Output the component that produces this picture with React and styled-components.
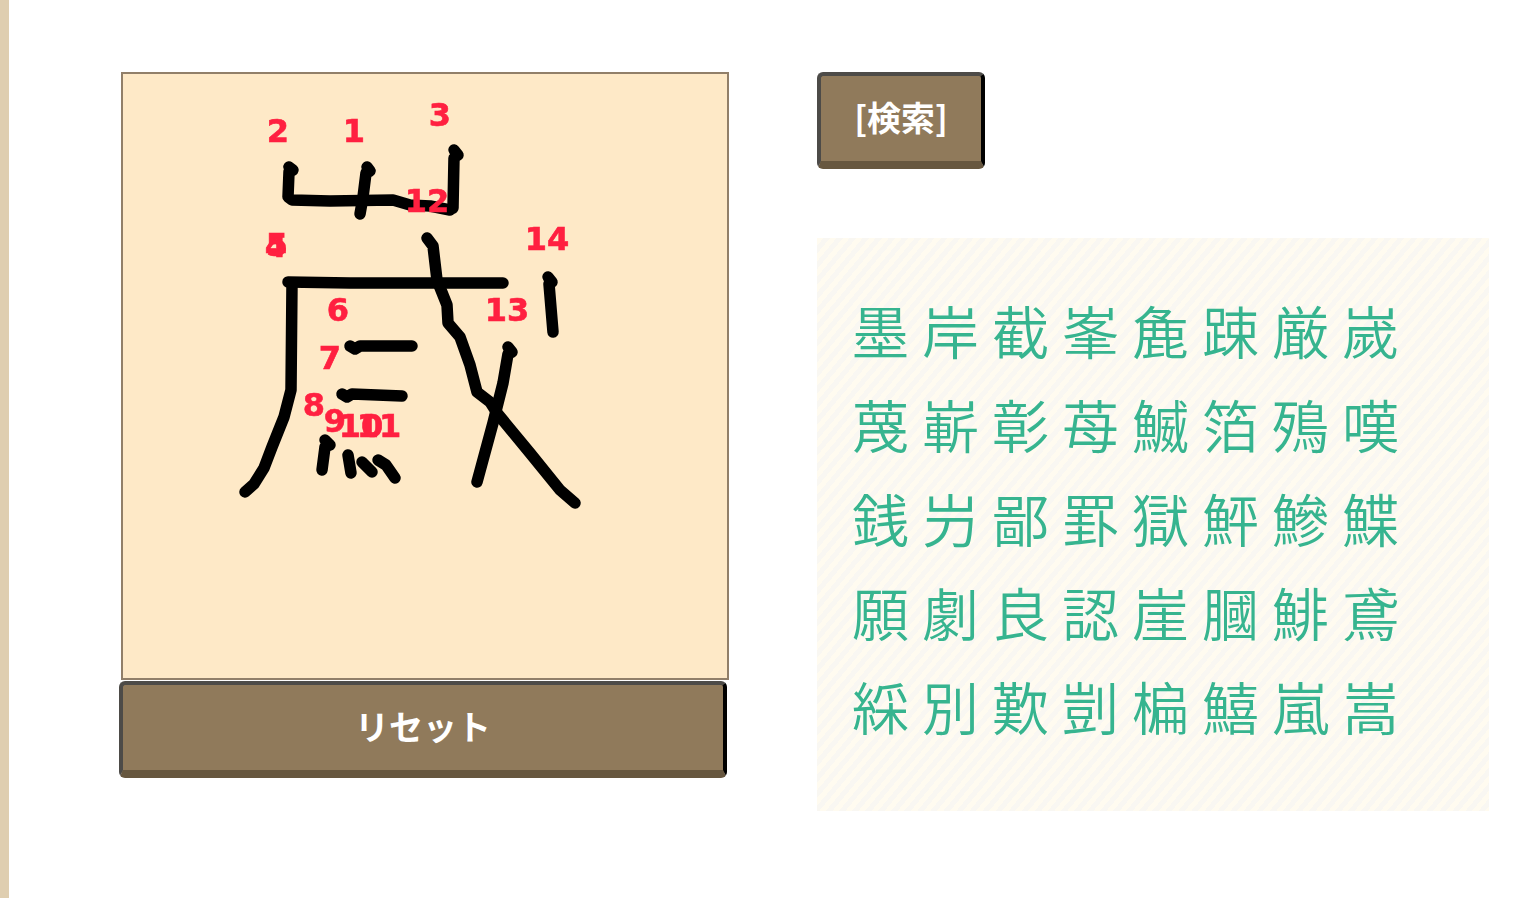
import React from "react";
import styled, { createGlobalStyle } from "styled-components";

const Global = createGlobalStyle`
  html, body { margin: 0; padding: 0; height: 100%; background: #fff; overflow: hidden; }
  body { font-family: "Noto Sans CJK JP", "Liberation Sans", sans-serif; }
`;

const Page = styled.div`
  box-sizing: border-box;
  height: 898px;
  border-left: 9px solid #dfceb0;
  padding: 72px 0 0 110px;
  display: flex;
  gap: 88px;
  align-items: flex-start;
`;

const LeftColumn = styled.section`
  display: flex;
  flex-direction: column;
  width: 610px;
`;

const RightColumn = styled.section`
  display: flex;
  flex-direction: column;
  align-items: flex-start;
  gap: 69px;
`;

const CanvasBox = styled.div`
  box-sizing: border-box;
  width: 608px;
  height: 608px;
  margin-left: 2px;
  margin-bottom: 1px;
  border: 2px solid #917f69;
  background: #fee9c7;
`;

const Sketch = styled.svg`
  display: block;
  width: 604px;
  height: 604px;
  filter: blur(0.7px);
`;

const Button = styled.button`
  box-sizing: border-box;
  width: ${(p) => p.$width}px;
  height: 97px;
  padding: 0 0 4px;
  background: #907a5b;
  color: #fff;
  font-family: "Noto Sans CJK JP", sans-serif;
  font-size: 34px;
  font-weight: 700;
  border-style: solid;
  border-width: 4px 4px 8px 4px;
  border-color: #4d4b48 #000 #67573f #4d4b48;
  border-radius: 6px;
`;

const CandidatePanel = styled.div`
  box-sizing: border-box;
  width: 672px;
  height: 573px;
  padding: 44px 0 0 35px;
  display: grid;
  grid-template-columns: repeat(8, 70px);
  grid-auto-rows: 94px;
  background: repeating-linear-gradient(130deg, #fffbf0 0 5px, #f9f7f2 5px 10px);
`;

const Candidate = styled.span`
  font-size: 57px;
  line-height: 94px;
  font-weight: 350;
  color: #36b48f;
  font-family: "Noto Sans CJK JP", sans-serif;
`;

const INK = [
  "M289 167 L293 170 L289 172 L288 197 L292 200 L330 201 L393 200 L410 205 L430 206 L450 210",
  "M367 167 L370 171 L366 173 L363 197 L360 214",
  "M454 150 L458 155 L454 158 L453 208",
  "M288 282 L350 283 L400 283 L503 283",
  "M292 284 L291 390 L284 417 L272 447 L264 468 L254 484 L245 492",
  "M427 238 L433 246 L437 280 L447 305 L448 323 L460 337 L470 365 L477 392 L490 402 L497 413 L530 453 L560 490 L575 503",
  "M508 347 L512 352 L508 354 L503 383 L493 423 L477 482",
  "M548 277 L552 282 L549 284 L553 332",
  "M350 346 L355 349 L360 346 L412 346",
  "M342 394 L347 397 L352 394 L402 396",
  "M325 440 L330 445 L325 447 L322 470",
  "M348 455 L351 473",
  "M362 462 L372 472",
  "M378 460 L386 465 L395 478",
];

const LABELS = [
  ["1", 354, 142],
  ["2", 278, 142],
  ["3", 440, 126],
  ["4", 276, 257],
  ["5", 277, 256],
  ["6", 338, 321],
  ["7", 330, 369],
  ["8", 314, 416],
  ["9", 335, 432],
  ["10", 361, 437],
  ["11", 379, 437],
  ["12", 427, 212],
  ["13", 507, 321],
  ["14", 547, 250],
];

const ROWS = [
  "墨岸截峯麁踈厳嵗",
  "蔑嶄彰苺鰄箔殦嘆",
  "銭屶鄙罫獄鮃鰺鰈",
  "願劇良認崖膕鯡鳶",
  "綵別歎剴楄鱚嵐嵩",
];

export default function App() {
  return (
    <Page>
      <Global />
      <LeftColumn>
        <CanvasBox>
          <Sketch viewBox="123 74 604 604">
            <g fill="none" stroke="#000" strokeWidth="11.5" strokeLinecap="round" strokeLinejoin="round">
              {INK.map((d) => (
                <path key={d} d={d} />
              ))}
            </g>
            <g
              fill="#ff2040"
              stroke="#ff2040"
              strokeWidth="0.6"
              fontFamily="DejaVu Sans"
              fontWeight="700"
              fontSize="32"
              textAnchor="middle"
            >
              {LABELS.map(([t, x, y]) => (
                <text key={t} x={x} y={y}>
                  {t}
                </text>
              ))}
            </g>
          </Sketch>
        </CanvasBox>
        <Button $width={608}>リセット</Button>
      </LeftColumn>
      <RightColumn>
        <Button $width={168}>[検索]</Button>
        <CandidatePanel>
          {ROWS.join("").split("").map((c, i) => (
            <Candidate key={i}>{c}</Candidate>
          ))}
        </CandidatePanel>
      </RightColumn>
    </Page>
  );
}
